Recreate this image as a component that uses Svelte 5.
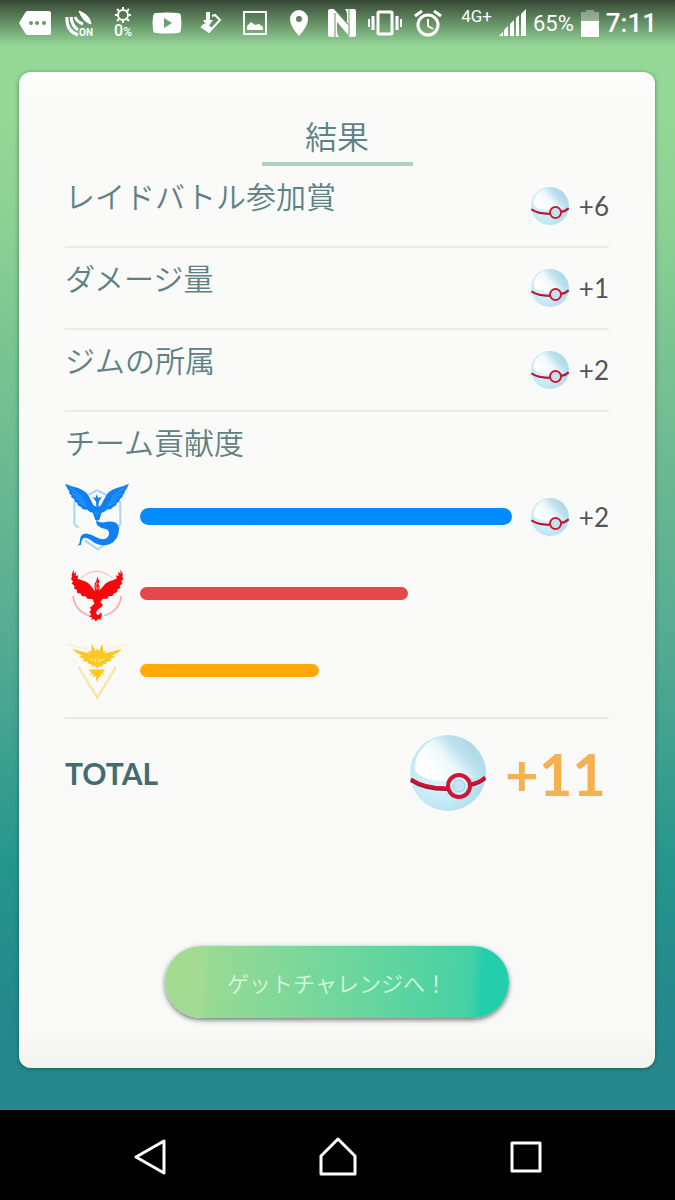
<script lang="ts">
  type Reward = { label: string; amount: number }
  type Team = { name: string; share: number; reward?: number }

  const rewards: Reward[] = [
    { label: 'レイドバトル参加賞', amount: 6 },
    { label: 'ダメージ量', amount: 1 },
    { label: 'ジムの所属', amount: 2 },
  ]

  const teams: Team[] = [
    { name: 'mystic', share: 100, reward: 2 },
    { name: 'valor', share: 72 },
    { name: 'instinct', share: 48 },
  ]

  let total = $derived(
    [...rewards.map((r) => r.amount), ...teams.map((t) => t.reward ?? 0)].reduce((a, b) => a + b, 0)
  )
</script>

{#snippet ball(small: boolean)}
  <svg class="ball" class:small viewBox="0 0 76 76" aria-hidden="true">
    <defs>
      <radialGradient id="ball-base" cx="0.4" cy="0.5" r="0.65">
        <stop offset="0" stop-color="#e0f5fb" />
        <stop offset="0.6" stop-color="#c6eaf5" />
        <stop offset="1" stop-color="#a8d9ea" />
      </radialGradient>
      <linearGradient id="ball-top" x1="0.2" y1="0.7" x2="0.9" y2="0.3">
        <stop offset="0" stop-color="#ffffff" />
        <stop offset="0.4" stop-color="#eef8fb" />
        <stop offset="0.7" stop-color="#bfe2ee" />
        <stop offset="1" stop-color="#add8e7" />
      </linearGradient>
    </defs>
    <circle cx="38" cy="38" r="38" fill="url(#ball-base)" />
    <path d="M5 30C8 12 22 1 38 1c18 0 31 12 34 29 2 7-6 13-13 14-5-8-17-8-22 2C22 46 3 42 5 30z" fill="url(#ball-top)" />
    <path d="M1 45c10 7 22 9 36 9M60 50c6-1 11-3 15-7" fill="none" stroke="#8b1f3a" stroke-width="4" />
    <path d="M1 44c10 7 22 9 36 9M60 49c6-1 11-3 15-7" fill="none" stroke="#d5122f" stroke-width="3" />
    <circle cx="49" cy="51" r="11" fill="#d3eff8" stroke="#cf1733" stroke-width="4" />
    <circle cx="49" cy="51" r="6" fill="#c2e7f3" stroke="#99cfe1" stroke-width="1" />
  </svg>
{/snippet}

{#snippet emblem(name: string)}
  {#if name === 'mystic'}
    <svg class="emblem tall" viewBox="42 31 198 216" aria-hidden="true">
      <path d="M141 56L213 94V160L196 199L144 240L104 212M71 162V94L141 56M71 162L84 172" fill="none" stroke="#a5d4fa" stroke-width="6" />
      <g fill="#0f80f4">
        <path d="M42 36Q60 44 83 49Q108 58 117 77L130 103L139 107L138 91L127 77L136 80L140 69L145 80L156 76L147 91L145 107L153 103L167 77Q174 58 202 49Q224 44 240 36Q234 52 226 61Q230 62 220 72Q224 75 211 84Q214 90 202 96Q203 103 190 108Q187 116 172 116Q163 126 155 126L148 149H136L128 126Q117 124 110 116Q96 119 92 108Q79 103 80 96Q68 91 71 84Q57 77 62 72Q51 66 56 60Q48 51 42 36z" />
        <path d="M139 148Q149 160 171 154Q207 148 209 176Q209 209 180 223Q153 233 127 215Q106 198 97 206Q91 214 92 225L81 227Q90 219 88 211Q89 190 108 190Q122 191 139 202Q163 215 175 200Q183 187 172 178Q155 176 145 167Q137 160 139 148z" />
      </g>
      <path d="M57 49L94 76M63 64L100 87M74 79L106 98M85 94L111 106M225 49L188 76M219 64L182 87M208 79L176 98M197 94L171 106M134 122L141 131L148 122" fill="none" stroke="#5cabf9" stroke-width="2" />
    </svg>
  {:else if name === 'valor'}
    <svg class="emblem" viewBox="42 27 198 180" aria-hidden="true">
      <path d="M91 68Q115 47 140 47T190 68" fill="none" stroke="#f4b4b6" stroke-width="3" />
      <path d="M67 123Q72 171 118 184M216 123Q211 170 164 184" fill="none" stroke="#f2a9ae" stroke-width="5" />
      <path d="M72 139Q84 172 116 182M211 139Q198 172 166 182" fill="none" stroke="#f7c6c9" stroke-width="3" />
      <g fill="#f5090b">
        <path d="M70 43L69 55L77 48L75 61L83 59L81 70L91 74Q113 79 121 91L135 109L133 94Q132 83 139 77L142 63Q145 74 149 78Q143 84 148 91Q151 95 147 108L162 91Q170 79 192 74L202 69L200 59L208 61L206 48L214 55L213 43Q224 55 219 66L223 68L216 79L220 83L211 93L214 98L203 105L204 111L192 116L189 123L178 123L172 132L159 132L151 142L159 150Q157 159 147 163Q134 172 141 181Q150 184 153 173Q159 183 152 193L154 197L144 194L137 202L132 194L123 197L126 189L116 187L123 181L117 171L123 167L119 158L126 155Q124 151 133 148L128 133L112 132L105 124L94 124L91 116L79 113L79 105L69 99L72 93L62 84L67 79L60 69L64 66Q60 54 70 43z" />
      </g>
      <path d="M142 80Q135 88 139 103M147 94L142 103" fill="none" stroke="#fde7e7" stroke-width="2" />
    </svg>
  {:else}
    <svg class="emblem" viewBox="42 34 198 180" aria-hidden="true">
      <path d="M48 42L110 56M234 42L172 56" fill="none" stroke="#fbeec5" stroke-width="5" />
      <path d="M84 112L142 206L199 112" fill="none" stroke="#f8e39e" stroke-width="7" />
      <path d="M92 122L142 197L190 122" fill="none" stroke="#fdf4d4" stroke-width="3" />
      <g fill="#fbc821">
        <path d="M64 56L119 70L112 63H123L125 40L137 63L141 53L146 63L158 40L160 63H171L164 70L218 56L205 68L187 77L199 79L181 87L187 93L168 96L172 101L157 105L160 110L147 109L141 116L135 109L122 110L126 105L112 101L114 96L96 93L101 87L84 79L95 77L79 68z" />
        <path d="M119 119H163L166 124L158 126L164 137L153 132L155 144L148 139L142 160L136 139L128 144L130 132L119 138L124 126L116 124z" />
      </g>
      <path d="M118 86L132 92M164 86L150 92M136 84V98M147 84V98" fill="none" stroke="#fff0b0" stroke-width="3" />
    </svg>
  {/if}
{/snippet}

<div class="screen">
  <header class="status">
    <div class="notices">
      <svg width="32" height="26" viewBox="0 0 32 26" fill="#fff">
        <path d="M9 1H30Q32 1 32 3V23Q32 25 30 25H9Q7 25 6 23L0 13L6 3Q7 1 9 1z" />
        <g fill="#68976a"><circle cx="12" cy="13" r="2" /><circle cx="18" cy="13" r="2" /><circle cx="25" cy="13" r="2" /></g>
      </svg>
      <svg width="28" height="28" viewBox="0 0 28 28" fill="none" stroke="#fff">
        <path d="M14 2Q25 6 26 15Q18 13 14 2z" fill="#fff" />
        <path d="M2 8Q1 22 13 26M6 8Q7 17 13 21M10 8Q12 13 18 15" stroke-width="3" />
        <text x="14" y="27" class="tiny">ON</text>
      </svg>
      <div class="brightness">
        <svg width="16" height="16" viewBox="0 0 16 16" fill="none" stroke="#fff">
          <circle cx="8" cy="8" r="5" stroke-width="2" />
          <path d="M8 0V2M8 14V16M0 8H2M14 8H16M2 2L4 4M12 12L14 14M2 14L4 12M12 4L14 2" stroke-width="2" />
        </svg>
        <span>0<small>%</small></span>
      </div>
      <svg width="30" height="22" viewBox="0 0 30 22">
        <path d="M4 1Q15 0 26 1Q29 1 29 5Q30 11 29 17Q29 21 26 21Q15 22 4 21Q1 21 1 17Q0 11 1 5Q1 1 4 1z" fill="#fff" />
        <path d="M12 6L20 11L12 16z" fill="#6c9f6e" />
      </svg>
      <svg width="22" height="22" viewBox="0 0 22 22" fill="none" stroke="#fff">
        <path d="M12 4L15 3L20 8L9 20L2 15L5 12" stroke-width="2" />
        <path d="M1 14L9 21L13 16L6 12z" fill="#fff" stroke="none" />
        <path d="M8 0V10" stroke-width="4" />
        <path d="M3 8H13L8 15z" fill="#fff" stroke="none" />
      </svg>
      <svg width="24" height="24" viewBox="0 0 24 24">
        <rect x="1" y="1" width="22" height="22" fill="none" stroke="#fff" stroke-width="2" />
        <path d="M4 19V15L8 11L12 14L16 13L20 16V19z" fill="#fff" />
      </svg>
    </div>
    <div class="radios">
      <svg width="20" height="28" viewBox="0 0 20 28">
        <path fill-rule="evenodd" d="M10 1A9 9 0 0 1 19 10Q19 17 10 27Q1 17 1 10A9 9 0 0 1 10 1zM10 7A3 3 0 1 0 10 13A3 3 0 1 0 10 7z" fill="#fff" />
      </svg>
      <svg width="30" height="30" viewBox="0 0 30 30" fill="#fff">
        <path d="M3 1H7L20 16V8Q20 3 18 1H27Q29 1 29 3V27Q29 29 27 29H23L10 14V22Q10 27 12 29H3Q1 29 1 27V3Q1 1 3 1z" />
        <path d="M7 1L22 17V27M8 5V29M22 1V17" fill="none" stroke="#669569" stroke-width="1" />
      </svg>
      <svg width="34" height="28" viewBox="0 0 34 28" fill="none" stroke="#fff" stroke-width="3">
        <rect x="10" y="3" width="14" height="22" rx="1" />
        <path d="M5 7V21M29 7V21" /><path d="M1 10V18M33 10V18" stroke-width="2" />
      </svg>
      <svg width="28" height="28" viewBox="0 0 28 28" fill="none" stroke="#fff" stroke-width="3">
        <circle cx="14" cy="16" r="10" />
        <path d="M1 7L8 2M27 7L20 2" /><path d="M14 10V17L19 20" stroke-width="2" />
      </svg>
    </div>
    <div class="system">
      <span class="network">4G+</span>
      <svg width="27" height="28" viewBox="0 0 27 28" fill="#fff">
        <path d="M0 27L4 23V27zM5 27V21L9 17V27zM11 27V15L15 11V27zM17 27V9L20 6V27zM22 27V5L27 0V27z" />
      </svg>
      <span class="percent">65%</span>
      <svg width="18" height="27" viewBox="0 0 18 27">
        <path d="M5 0H13V2H18V11H0V2H5z" fill="#fff" opacity="0.35" />
        <path d="M0 11H18V27H0z" fill="#fff" />
      </svg>
      <time>7:11</time>
    </div>
  </header>

  <main>
    <section class="card">
      <h1>結果</h1>

      {#each rewards as reward}
        <div class="row">
          <h2>{reward.label}</h2>
          <div class="reward">{@render ball(true)}<span>+{reward.amount}</span></div>
        </div>
      {/each}

      <div class="teams">
        <h2>チーム貢献度</h2>
        {#each teams as team}
          <div class="team">
            {@render emblem(team.name)}
            <div class="track"><div class="bar {team.name}" style:width="{team.share}%"></div></div>
            {#if team.reward}
              <div class="reward">{@render ball(true)}<span>+{team.reward}</span></div>
            {/if}
          </div>
        {/each}
      </div>

      <div class="total">
        <strong>TOTAL</strong>
        {@render ball(false)}
        <span class="sum">+{total}</span>
      </div>

      <button type="button" class="next">ゲットチャレンジへ！</button>
    </section>
  </main>

  <nav>
    <button type="button" aria-label="戻る">
      <svg width="40" height="40" viewBox="0 0 40 40"><path d="M34 4V36L6 20z" /></svg>
    </button>
    <button type="button" aria-label="ホーム">
      <svg width="40" height="40" viewBox="0 0 40 40"><path d="M20 2L37 19V37H3V19z" /></svg>
    </button>
    <button type="button" aria-label="履歴">
      <svg width="40" height="40" viewBox="0 0 40 40"><path d="M6 6H34V34H6z" /></svg>
    </button>
  </nav>
</div>

<style>
  :global(body) {
    margin: 0;
  }

  .screen {
    display: flex;
    flex-direction: column;
    min-height: 100vh;
    font-family: Lato, 'Noto Sans CJK JP', sans-serif;
    background: linear-gradient(#94d796 0%, #94d796 10%, #8dd194 18%, #7cc592 28%, #54aa92 54%, #25968c 72%, #25888c 84%, #26868c 100%);
  }

  .status {
    display: flex;
    align-items: center;
    height: 46px;
    padding: 0 18px 0 13px;
    box-sizing: border-box;
    color: #fff;
    font-family: Roboto, sans-serif;
    background: linear-gradient(rgba(30, 35, 28, 0.8), rgba(30, 35, 28, 0.55) 30%, transparent);
  }

  .notices,
  .radios {
    display: grid;
    grid-auto-flow: column;
    grid-auto-columns: 44px;
    place-items: center;
  }

  .radios {
    grid-auto-columns: 43px;
  }

  .tiny {
    font-size: 10px;
    font-weight: 700;
    fill: #fff;
    stroke: none;
  }

  .brightness {
    display: flex;
    flex-direction: column;
    align-items: center;
    font-size: 16px;
    font-weight: 500;
    line-height: 16px;
  }

  .brightness small {
    font-size: 12px;
  }

  .system {
    display: flex;
    align-items: center;
    gap: 7px;
    margin-left: auto;
  }

  .network {
    align-self: flex-start;
    font-size: 17px;
    line-height: 16px;
  }

  .percent {
    font-size: 22px;
  }

  time {
    font-size: 26px;
    font-weight: 500;
  }

  main {
    display: flex;
    flex: 1;
    padding: 26px 20px 42px 19px;
  }

  .card {
    display: flex;
    flex: 1;
    flex-direction: column;
    padding: 40px 46px 50px 46px;
    border-radius: 12px;
    background: linear-gradient(#fff, #fafbf8 24px, #f9faf8 calc(100% - 40px), #f3f4ee);
    box-shadow: 0 1px 4px rgba(20, 70, 60, 0.6);
  }

  h1 {
    align-self: center;
    width: 151px;
    margin: 0;
    border-bottom: 4px solid #afd3c0;
    color: #5f8184;
    font-size: 32px;
    font-weight: 350;
    line-height: 50px;
    text-align: center;
  }

  h2 {
    margin: 0;
    color: #5f8184;
    font-size: 30px;
    font-weight: 350;
    line-height: 40px;
  }

  .row {
    display: flex;
    justify-content: space-between;
    height: 80px;
    border-bottom: 2px solid #e8eae8;
  }

  .row h2,
  .teams h2 {
    padding-top: 10px;
  }

  .reward {
    display: flex;
    align-items: center;
    justify-content: space-between;
    width: 78px;
    color: #505456;
    font-size: 26px;
  }

  .ball {
    width: 76px;
    height: 76px;
  }

  .ball.small {
    width: 38px;
    height: 38px;
  }

  .teams {
    padding-bottom: 8px;
    border-bottom: 2px solid #e8eae8;
  }

  .team {
    display: grid;
    grid-template-columns: 66px 1fr 78px;
    align-items: center;
    height: 77px;
  }

  .team:nth-child(2) {
    margin-top: 16px;
  }

  .emblem {
    width: 64px;
    height: 60px;
  }

  .emblem.tall {
    height: 70px;
  }

  .track {
    margin: 0 19px 0 9px;
  }

  .bar {
    height: 13px;
    border-radius: 9px;
  }

  .bar.mystic {
    height: 17px;
    background: #028bff;
  }

  .bar.valor {
    background: #e54848;
  }

  .bar.instinct {
    background: #ffa908;
  }

  .total {
    display: flex;
    align-items: center;
    height: 108px;
  }

  .total strong {
    margin-right: auto;
    color: #456a6f;
    font-size: 30px;
  }

  .sum {
    margin: 0 3px 0 19px;
    color: #f5b04f;
    font-size: 58px;
    font-weight: 700;
  }

  .next {
    align-self: center;
    width: 344px;
    height: 72px;
    margin-top: auto;
    border: 0;
    border-radius: 36px;
    color: #d5f7dd;
    font-family: 'Noto Sans CJK JP', sans-serif;
    font-size: 22px;
    font-weight: 350;
    background: linear-gradient(93deg, #a3db93 11%, #97da94 14%, #60d5a0 65%, #45d1a5 88%, #24cdac 92%);
    box-shadow: 0 2px 5px rgba(50, 60, 60, 0.7);
  }

  nav {
    display: flex;
    justify-content: center;
    gap: 148px;
    height: 90px;
    padding-top: 6px;
    box-sizing: border-box;
    background: #000;
  }

  nav button {
    padding: 0;
    border: 0;
    background: none;
  }

  nav path {
    fill: none;
    stroke: #fff;
    stroke-width: 3;
    stroke-linejoin: round;
  }
</style>
